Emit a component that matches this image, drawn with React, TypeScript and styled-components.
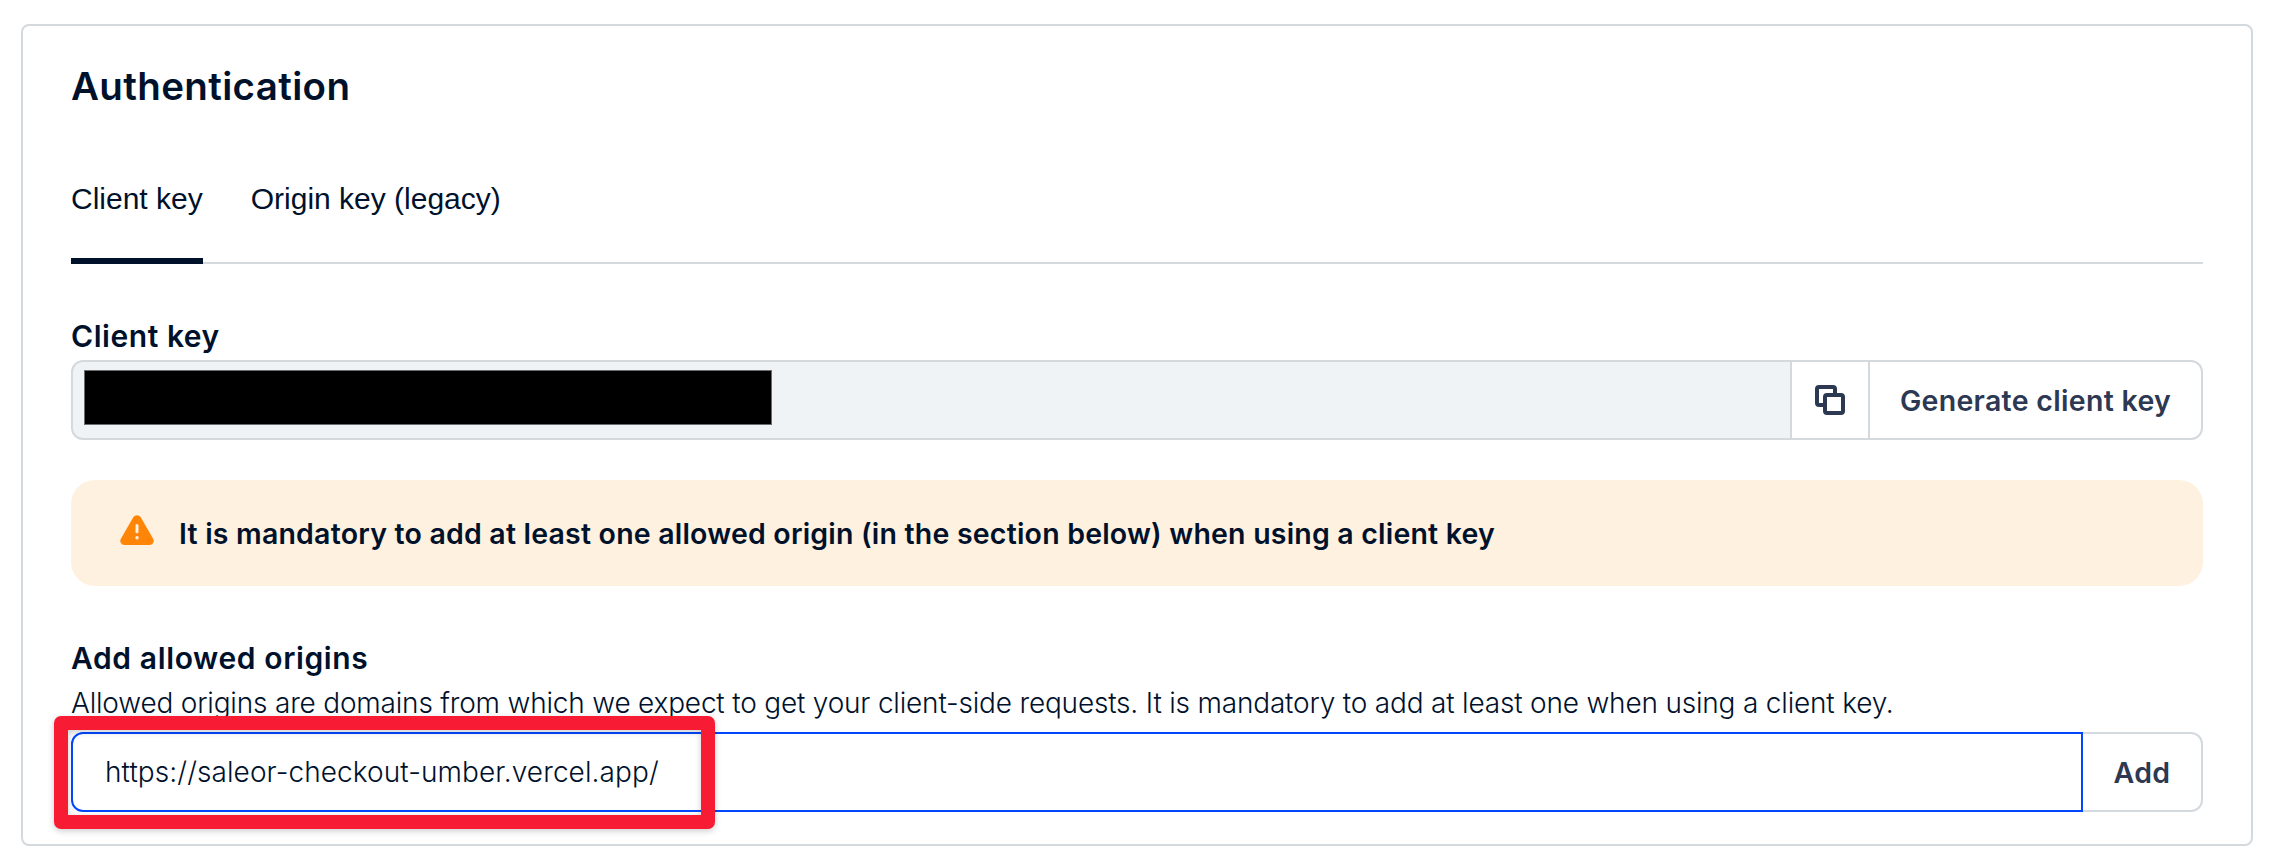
import React from "react";
import styled, { createGlobalStyle } from "styled-components";

const color = {
  ink: "#00112c",
  action: "#2d3853",
  line: "#d4d9de",
  field: "#eff3f6",
  focus: "#0047ff",
  warningBg: "#fff1df",
  warning: "#ff8509",
  marker: "#f71c33",
};

const GlobalStyle = createGlobalStyle`
  *, *::before, *::after { box-sizing: border-box; }
  body {
    margin: 0;
    background: #fff;
    color: ${color.ink};
    font-family: Inter, "Liberation Sans", sans-serif;
  }
  h1, h2, p { margin: 0; }
  button { margin: 0; font-family: inherit; cursor: pointer; }
`;

const Page = styled.main`
  padding: 24px 29px 22px 21px;
`;

const Card = styled.section`
  display: flex;
  flex-direction: column;
  height: 822px;
  padding: 36px 48px 0;
  border: 2px solid ${color.line};
  border-radius: 8px;
`;

const Title = styled.h1`
  font-size: 38.5px;
  font-weight: 600;
  line-height: 48px;
  letter-spacing: 0.35px;
`;

const Tabs = styled.nav`
  display: flex;
  gap: 48px;
  margin-top: 69px;
  border-bottom: 2px solid ${color.line};
`;

const Tab = styled.button<{ $active?: boolean }>`
  height: 85px;
  margin-bottom: -2px;
  padding: 0 0 39px;
  border: 0;
  border-bottom: 6px solid ${(p) => (p.$active ? color.ink : "transparent")};
  background: none;
  color: ${color.ink};
  font: 30px/40px "Liberation Sans", Arial, sans-serif;
`;

const Label = styled.h2<{ $spacing: number }>`
  margin-top: 54px;
  font-size: 30px;
  font-weight: 600;
  line-height: 36px;
  letter-spacing: ${(p) => p.$spacing}px;
`;

const Description = styled.p`
  margin-top: 9px;
  font-size: 28px;
  font-weight: 300;
  line-height: 36px;
  letter-spacing: -0.19px;
  white-space: nowrap;
`;

const FieldRow = styled.div<{ $gap: number }>`
  position: relative;
  display: flex;
  flex: none;
  height: 80px;
  margin-top: ${(p) => p.$gap}px;
`;

const KeyField = styled.div`
  flex: 1;
  padding: 8px 11px;
  border: 2px solid ${color.line};
  border-radius: 12px 0 0 12px;
  background: ${color.field};
`;

const Redaction = styled.div`
  width: 688px;
  height: 55px;
  border: 1px solid #6b6d6f;
  background: #000;
`;

const FieldButton = styled.button<{ $width: number; $last?: boolean }>`
  display: flex;
  flex: none;
  align-items: center;
  justify-content: center;
  width: ${(p) => p.$width}px;
  padding: 0;
  border: 2px solid ${color.line};
  border-left: 0;
  border-radius: ${(p) => (p.$last ? "0 12px 12px 0" : "0")};
  background: #fff;
  color: ${color.action};
  font-size: 28.5px;
  font-weight: 600;
  letter-spacing: 0.3px;
`;

const OriginField = styled.div`
  display: flex;
  flex: 1;
  align-items: center;
  padding-left: 32px;
  border: 2px solid ${color.focus};
  border-radius: 12px 0 0 12px;
  font-size: 28px;
  font-weight: 300;
  letter-spacing: 0.09px;
`;

const Highlight = styled.div`
  position: absolute;
  top: -16px;
  left: -17px;
  width: 661px;
  height: 113px;
  border: 14px solid ${color.marker};
  border-radius: 7px;
  filter: drop-shadow(0 2px 3px rgba(0, 0, 0, 0.2));
`;

const Alert = styled.div`
  display: flex;
  flex: none;
  align-items: center;
  gap: 25px;
  height: 106px;
  margin-top: 40px;
  padding-left: 49px;
  border-radius: 24px;
  background: ${color.warningBg};
  font-size: 28.5px;
  font-weight: 600;
  letter-spacing: 0.2px;
  white-space: nowrap;

  svg { flex: none; margin-bottom: 6px; }
`;

const CopyIcon = () => (
  <svg width="30" height="30" viewBox="0 0 30 30" fill="none" stroke="currentColor" strokeWidth="4">
    <path d="M8 20H4a2 2 0 0 1-2-2V4a2 2 0 0 1 2-2h14a2 2 0 0 1 2 2v4" />
    <rect x="10" y="10" width="18" height="18" rx="2" />
  </svg>
);

const WarningIcon = () => (
  <svg width="34" height="30" viewBox="0 0 34 30">
    <path
      d="M13.4 2.1a4.3 4.3 0 0 1 7.2 0L33.1 23.8A4.1 4.1 0 0 1 29.5 30h-25A4.1 4.1 0 0 1 .9 23.8z"
      fill={color.warning}
    />
    <path d="M17 10.5v6.2" stroke={color.warningBg} strokeWidth="3" strokeLinecap="round" />
    <circle cx="17" cy="22.7" r="1.7" fill={color.warningBg} />
  </svg>
);

export default function App() {
  return (
    <>
      <GlobalStyle />
      <Page>
        <Card>
          <Title>Authentication</Title>
          <Tabs>
            <Tab $active>Client key</Tab>
            <Tab>Origin key (legacy)</Tab>
          </Tabs>

          <Label $spacing={0.55}>Client key</Label>
          <FieldRow $gap={6}>
            <KeyField>
              <Redaction />
            </KeyField>
            <FieldButton $width={78} aria-label="Copy client key">
              <CopyIcon />
            </FieldButton>
            <FieldButton $width={333} $last>
              Generate client key
            </FieldButton>
          </FieldRow>

          <Alert>
            <WarningIcon />
            <span>
              It is mandatory to add at least one allowed origin (in the section below) when using a client key
            </span>
          </Alert>

          <Label $spacing={0.62}>Add allowed origins</Label>
          <Description>
            Allowed origins are domains from which we expect to get your client-side requests. It is mandatory to add at
            least one when using a client key.
          </Description>
          <FieldRow $gap={11}>
            <OriginField>https://saleor-checkout-umber.vercel.app/</OriginField>
            <FieldButton $width={120} $last>
              Add
            </FieldButton>
            <Highlight />
          </FieldRow>
        </Card>
      </Page>
    </>
  );
}
